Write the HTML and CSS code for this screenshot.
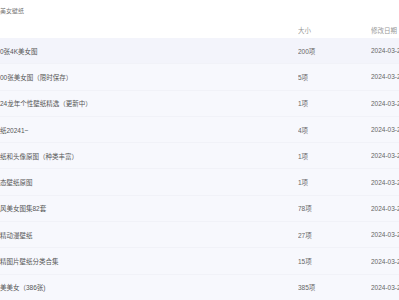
FILE: index.html
```html
<!DOCTYPE html>
<html lang="zh-CN">
<head>
  <meta charset="UTF-8" />
  <meta name="viewport" content="width=device-width, initial-scale=1.0" />
  <title>美女壁纸</title>

  <link rel="stylesheet" href="styles.css">
</head>
<body>

  <div class="page">
    <!-- 路径 -->
    <div class="breadcrumb">美女壁纸</div>

    <!-- 文件列表 -->
    <div class="file-list">
      <div class="list-head">
        <span class="col-name"></span>
        <span class="col-size">大小</span>
        <span class="col-date">修改日期</span>
      </div>

      <div class="file-row active">
        <span class="col-name">0张4K美女图</span>
        <span class="col-size">200项</span>
        <span class="col-date">2024-03-26</span>
      </div>
      <div class="file-row">
        <span class="col-name">00张美女图（限时保存）</span>
        <span class="col-size">5项</span>
        <span class="col-date">2024-03-26</span>
      </div>
      <div class="file-row">
        <span class="col-name">24龙年个性壁纸精选（更新中）</span>
        <span class="col-size">1项</span>
        <span class="col-date">2024-03-26</span>
      </div>
      <div class="file-row">
        <span class="col-name">纸20241~</span>
        <span class="col-size">4项</span>
        <span class="col-date">2024-03-26</span>
      </div>
      <div class="file-row">
        <span class="col-name">纸和头像原图（种类丰富）</span>
        <span class="col-size">1项</span>
        <span class="col-date">2024-03-26</span>
      </div>
      <div class="file-row">
        <span class="col-name">态壁纸原图</span>
        <span class="col-size">1项</span>
        <span class="col-date">2024-03-26</span>
      </div>
      <div class="file-row">
        <span class="col-name">风美女图集82套</span>
        <span class="col-size">78项</span>
        <span class="col-date">2024-03-26</span>
      </div>
      <div class="file-row">
        <span class="col-name">精动漫壁纸</span>
        <span class="col-size">27项</span>
        <span class="col-date">2024-03-26</span>
      </div>
      <div class="file-row">
        <span class="col-name">精图片壁纸分类合集</span>
        <span class="col-size">15项</span>
        <span class="col-date">2024-03-26</span>
      </div>
      <div class="file-row">
        <span class="col-name">美美女（386张)</span>
        <span class="col-size">385项</span>
        <span class="col-date">2024-03-26</span>
      </div>
    </div>
  </div>

</body>
</html>
```

FILE: styles.css
```css
body {
  font-family: "Liberation Sans", "Noto Sans CJK SC", sans-serif;
  background-color: #fff;
  margin: 0;
  padding: 0;
  overflow: hidden;
}

.page {
  width: 399px;
  overflow: hidden;
}

.breadcrumb {
  height: 22px;
  line-height: 22px;
  font-size: 6px;
  color: #777;
  white-space: nowrap;
}

.list-head,
.file-row {
  display: grid;
  grid-template-columns: 298px 73px 100px;
  align-items: center;
  white-space: nowrap;
  font-size: 6.5px;
}

.list-head {
  height: 16px;
  color: #999;
}

.file-row {
  height: 26.3px;
  box-sizing: border-box;
  background-color: #f7f8fd;
  border-bottom: 1px solid #f1f2f8;
  color: #555;
}

.file-row.active {
  background-color: #f3f4fb;
}

.col-name,
.col-size,
.col-date {
  overflow: hidden;
}

.col-size,
.col-date {
  color: #666;
}

.list-head .col-size,
.list-head .col-date {
  color: #999;
}
```
